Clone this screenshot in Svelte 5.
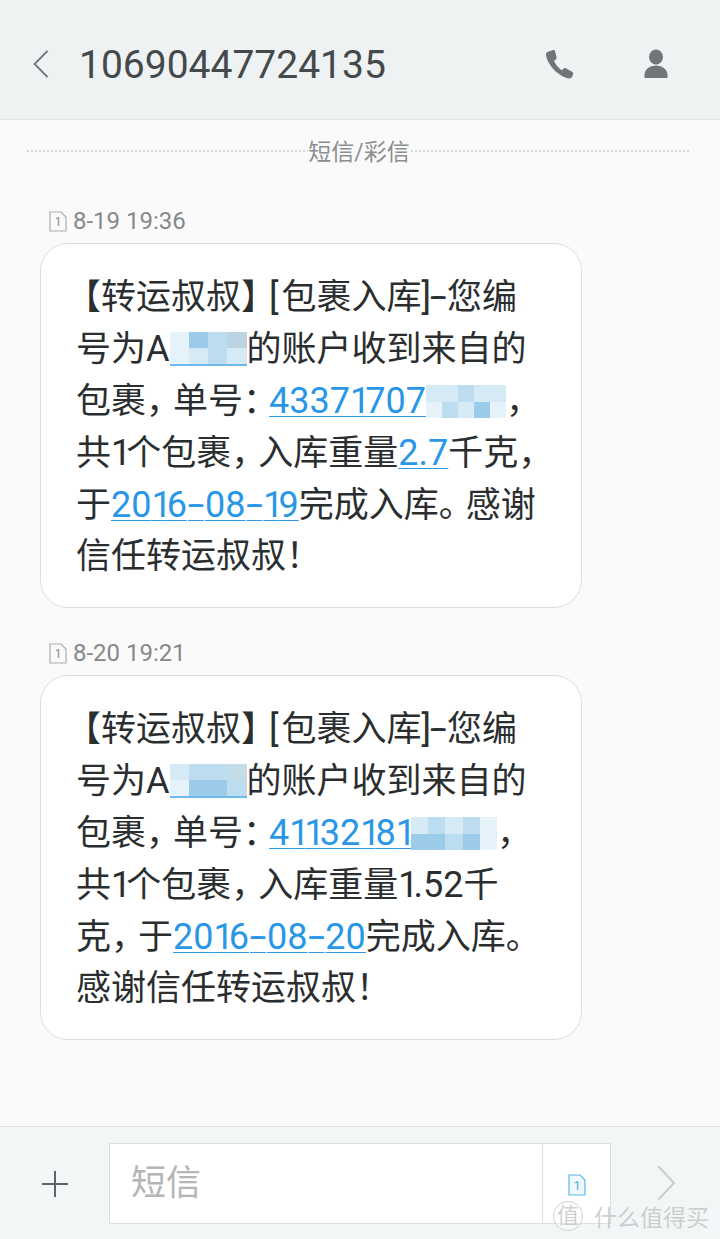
<script lang="ts">
  type Blur = { w: number; top: number; h: number; cols: number; under?: boolean; cells: string[] };
  type Part = { t: string; link?: boolean; blur?: Blur };

  const pale = '#d6eaf6', mid = '#bcdcf0', deep = '#9ccbea', soft = '#e6f2fa';

  const messages: { time: string; lines: Part[][] }[] = [
    {
      time: '8-19 19:36',
      lines: [
        [{ t: '【转运叔叔】[包裹入库]-您编' }],
        [
          { t: '号为A' },
          { t: '', blur: { w: 77, top: 9, h: 34, cols: 4, under: true, cells: [soft, deep, mid, '#bcd4e2', soft, pale, mid, pale] } },
          { t: '的账户收到来自的' }
        ],
        [
          { t: '包裹，单号：' },
          { t: '43371707', link: true },
          { t: '', blur: { w: 80, top: 10, h: 33, cols: 5, cells: [pale, pale, mid, pale, pale, soft, mid, pale, deep, soft] } },
          { t: '，' }
        ],
        [{ t: '共1个包裹，入库重量' }, { t: '2.7', link: true }, { t: '千克，' }],
        [{ t: '于' }, { t: '2016-08-19', link: true }, { t: '完成入库。感谢' }],
        [{ t: '信任转运叔叔！' }]
      ]
    },
    {
      time: '8-20 19:21',
      lines: [
        [{ t: '【转运叔叔】[包裹入库]-您编' }],
        [
          { t: '号为A' },
          { t: '', blur: { w: 77, top: 9, h: 34, cols: 4, under: true, cells: [pale, mid, mid, '#c4dbe8', soft, deep, deep, mid] } },
          { t: '的账户收到来自的' }
        ],
        [
          { t: '包裹，单号：' },
          { t: '41132181', link: true },
          { t: '', blur: { w: 86, top: 10, h: 33, cols: 5, cells: [pale, mid, pale, mid, soft, deep, deep, mid, deep, soft] } },
          { t: '，' }
        ],
        [{ t: '共1个包裹，入库重量1.52千' }],
        [{ t: '克，于' }, { t: '2016-08-20', link: true }, { t: '完成入库。' }],
        [{ t: '感谢信任转运叔叔！' }]
      ]
    }
  ];

  // the phone's font squeezes punctuation and sets latin a bit larger
  const classFor: Record<string, string> = {
    '【': 'lead',
    '】': 'tight-b',
    '，': 'tight',
    '：': 'tight-c',
    '。': 'tight',
    '[': 'lat open',
    ']': 'lat close',
    '-': 'lat dash',
    '1': 'lat one'
  };

  function runs(text: string) {
    const out: { s: string; c: string }[] = [];
    for (const ch of text) {
      const c = classFor[ch] ?? (/[0-9A-Za-z.]/.test(ch) ? 'lat' : '');
      const last = out[out.length - 1];
      if (last && last.c === c && !classFor[ch]) last.s += ch;
      else out.push({ s: ch, c });
    }
    return out;
  }
</script>

{#snippet typed(text: string)}
  {#each runs(text) as r}<span class={r.c}>{r.s}</span>{/each}
{/snippet}

<div class="screen">
  <header class="topbar">
    <svg class="back" width="20" height="32" viewBox="0 0 20 32" aria-label="返回">
      <path d="M15.5 3 L2.5 16 L15.5 29" fill="none" stroke="#70777a" stroke-width="1.8" />
    </svg>
    <h1>10690447724135</h1>
    <svg class="call" width="32" height="32" viewBox="0 0 32 32" aria-label="电话">
      <path
        d="M3.5 4 L9 2 C10 1.7 10.8 2.2 11 3 L12.6 9.6 C12.8 10.4 12.4 11 11.8 11.4 L10 12.8 C11.4 16.4 14.4 20.2 17.6 22.2 L19.8 20.4 C20.4 19.9 21.2 19.8 21.9 20.2 L28.4 24 C29.2 24.5 29.5 25.2 29.2 26 L28 29 C27.5 30 26.4 30.6 25 30.4 C14 28.6 3.4 16.5 2 7 C1.9 5.5 2.4 4.5 3.5 4 Z"
        fill="#6f7678"
      />
    </svg>
    <svg class="person" width="28" height="32" viewBox="0 0 28 32" aria-label="联系人">
      <ellipse cx="14" cy="9" rx="7" ry="7.6" fill="#6f7678" />
      <path d="M2.5 30 L25.5 30 L25.5 27 C25.5 21.5 20 17.5 14 17.5 C8 17.5 2.5 21.5 2.5 27 Z" fill="#6f7678" />
    </svg>
  </header>

  <main class="thread">
    <div class="divider"><span>短信/彩信</span></div>

    {#each messages as msg}
      <section class="message">
        <div class="stamp">
          <svg width="18" height="21" viewBox="0 0 18 21">
            <path d="M1 1 H12 L17 6 V20 H1 Z" fill="none" stroke="#a9adae" stroke-width="1.2" />
            <text x="9" y="15" text-anchor="middle" class="sim-num">1</text>
          </svg>
          <span>{msg.time}</span>
        </div>
        <div class="bubble">
          {#each msg.lines as line}
            <div class="line">
              {#each line as part}
                {#if part.blur}
                  <span
                    class="mosaic"
                    class:under={part.blur.under}
                    style:width="{part.blur.w}px"
                    style:height="{part.blur.h}px"
                    style:margin-top="{part.blur.top}px"
                    style:grid-template-columns="repeat({part.blur.cols}, 1fr)"
                  >
                    {#each part.blur.cells as c}
                      <i style:background={c}></i>
                    {/each}
                  </span>
                {:else if part.link}
                  <a href="#top">{@render typed(part.t)}</a>
                {:else}
                  {@render typed(part.t)}
                {/if}
              {/each}
            </div>
          {/each}
        </div>
      </section>
    {/each}
  </main>

  <footer class="composer">
    <svg class="plus" width="28" height="28" viewBox="0 0 28 28" aria-label="添加">
      <path d="M14 1 V27 M1 14 H27" stroke="#5d6364" stroke-width="2" fill="none" />
    </svg>
    <div class="field">
      <span class="placeholder">短信</span>
      <div class="sim">
        <svg width="18" height="22" viewBox="0 0 18 22">
          <path d="M1 1 H12 L17 6 V21 H1 Z" fill="#eef8fd" stroke="#5cb8e6" stroke-width="1.2" />
          <text x="9" y="16" text-anchor="middle" class="sim-num blue">1</text>
        </svg>
      </div>
    </div>
    <svg class="send" width="20" height="36" viewBox="0 0 20 36" aria-label="发送">
      <path d="M2 1 L18 18 L2 35" fill="none" stroke="#c9cdcd" stroke-width="2" />
    </svg>
    <div class="watermark">
      <span class="seal">值</span>
      <span>什么值得买</span>
    </div>
  </footer>
</div>

<style>
  :global(body) {
    margin: 0;
    background: #fafafa;
  }
  .screen {
    position: relative;
    width: 720px;
    height: 1239px;
    display: flex;
    flex-direction: column;
    overflow: hidden;
    font-family: Roboto, "Noto Sans CJK SC", sans-serif;
    color: #2f3233;
  }
  .topbar {
    flex: none;
    box-sizing: border-box;
    height: 120px;
    display: flex;
    align-items: center;
    padding: 8px 0 0 32px;
    background: #eff2f2;
    border-bottom: 1px solid #dfe3e3;
  }
  .back { margin-right: 27px; }
  .topbar h1 {
    flex: 1;
    margin: 0;
    padding-top: 3px;
    font-size: 39px;
    font-weight: 400;
    color: #44494b;
  }
  .call { margin-right: 66px; }
  .person { margin-right: 50px; }
  .thread {
    flex: 1;
    padding: 0 0 0 40px;
    background: #fafafa;
  }
  .divider {
    display: flex;
    justify-content: center;
    margin: 15px 30px 0 -14px;
    padding-left: 2px;
    height: 32px;
    line-height: 35px;
    background: radial-gradient(circle, #d6d8d8 0.8px, transparent 1px) 0 center / 4px 2px repeat-x;
  }
  .divider span {
    height: 32px;
    font-size: 23px;
    color: #8a8e8f;
    background: #fafafa;
  }
  .message { margin-bottom: 28px; }
  .stamp {
    display: flex;
    align-items: center;
    gap: 6px;
    height: 34px;
    margin: 37px 0 5px 9px;
    font-size: 24px;
    color: #85898a;
  }
  .message + .message .stamp { margin-top: 0; }
  .sim-num {
    font: 12px Roboto, sans-serif;
    fill: #85898a;
  }
  .sim-num.blue { fill: #4aa8dc; }
  .bubble {
    box-sizing: border-box;
    width: 542px;
    height: 365px;
    padding: 27px 0 0 35px;
    background: #fff;
    border: 1px solid #dcdede;
    border-radius: 28px;
  }
  .line {
    height: 52px;
    line-height: 52px;
    font-size: 35px;
    white-space: nowrap;
    color: #2b2e2f;
  }
  .lat { font-size: 36px; }
  .one { letter-spacing: -5px; }
  .dash {
    padding: 0 4px;
    text-shadow: 3px 0 currentColor, -3px 0 currentColor;
  }
  .open { letter-spacing: 3px; }
  .close { letter-spacing: -2px; }
  .lead { margin-left: -10px; }
  .tight { letter-spacing: -8px; }
  .tight-b { letter-spacing: -7px; }
  .tight-c { letter-spacing: -9px; }
  a {
    color: #2a97e6;
    text-decoration: underline;
    text-decoration-thickness: 1px;
    text-decoration-skip-ink: none;
    text-underline-offset: 3px;
  }
  .mosaic {
    display: inline-grid;
    vertical-align: top;
    box-sizing: border-box;
  }
  .mosaic.under { border-bottom: 2px solid #6db9ee; }
  .composer {
    flex: none;
    position: relative;
    box-sizing: border-box;
    height: 113px;
    display: flex;
    align-items: flex-start;
    padding: 16px 0 0 41px;
    background: #f3f6f6;
    border-top: 1px solid #e0e3e3;
  }
  .plus { margin: 27px 40px 0 0; }
  .field {
    box-sizing: border-box;
    width: 502px;
    height: 81px;
    display: flex;
    justify-content: space-between;
    background: #fff;
    border: 1px solid #dcdfdf;
  }
  .placeholder {
    padding-left: 21px;
    line-height: 80px;
    font-size: 35px;
    color: #b4b6b6;
  }
  .sim {
    box-sizing: border-box;
    width: 68px;
    padding: 30px 0 0 25px;
    border-left: 1px solid #dcdfdf;
  }
  .send { margin: 22px 0 0 45px; }
  .watermark {
    position: absolute;
    left: 553px;
    top: 72px;
    display: flex;
    align-items: center;
    gap: 11px;
    font-size: 23px;
    color: rgba(185, 188, 188, 0.7);
    white-space: nowrap;
  }
  .seal {
    width: 28px;
    height: 28px;
    border: 1px solid rgba(190, 192, 192, 0.7);
    border-radius: 50%;
    font-size: 22px;
    line-height: 28px;
    text-align: center;
    background: rgba(255, 255, 255, 0.5);
  }
</style>
